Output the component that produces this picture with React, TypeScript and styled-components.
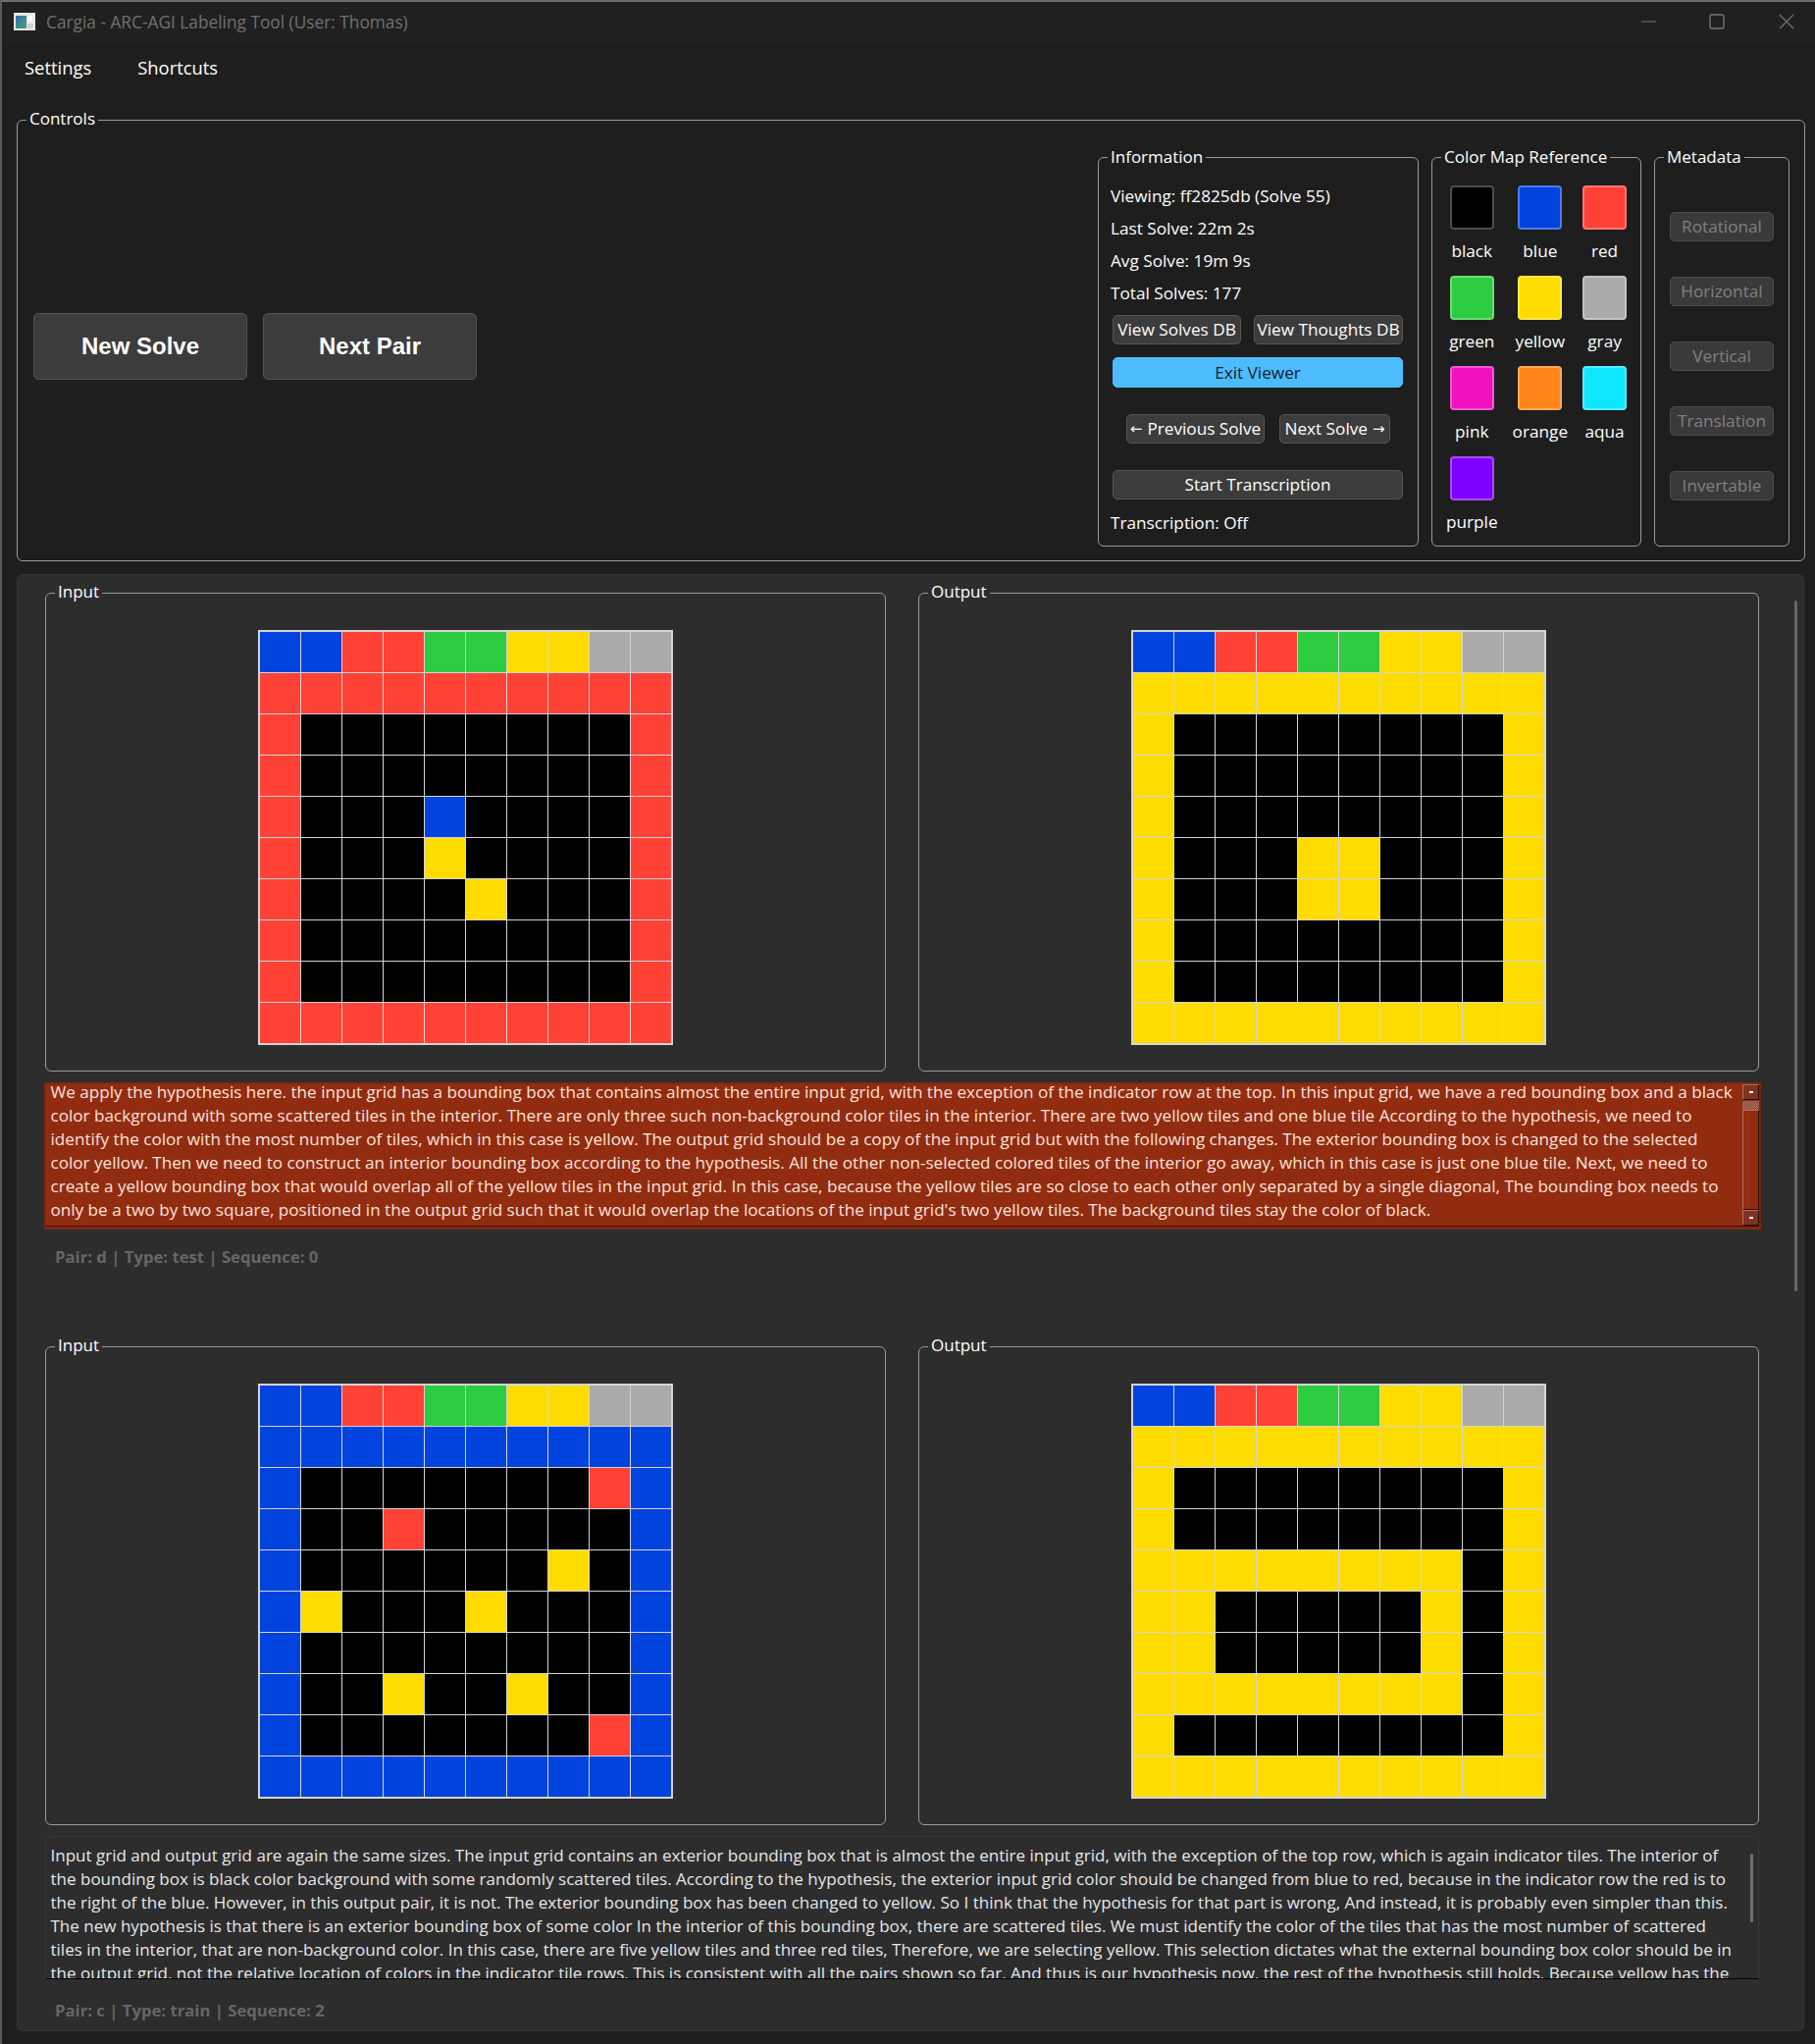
import * as React from 'react';
import styled, { createGlobalStyle } from 'styled-components';

const COLORS: Record<string, string> = {
  k: '#000000',
  b: '#0043df',
  r: '#ff4136',
  g: '#2ecc40',
  y: '#ffdc00',
  a: '#aaaaaa',
  p: '#f012be',
  o: '#ff851b',
  c: '#0fe6ff',
  u: '#7f00ff',
};

const SWATCHES = [
  { name: 'black', code: 'k' },
  { name: 'blue', code: 'b' },
  { name: 'red', code: 'r' },
  { name: 'green', code: 'g' },
  { name: 'yellow', code: 'y' },
  { name: 'gray', code: 'a' },
  { name: 'pink', code: 'p' },
  { name: 'orange', code: 'o' },
  { name: 'aqua', code: 'c' },
  { name: 'purple', code: 'u' },
];

const METADATA = ['Rotational', 'Horizontal', 'Vertical', 'Translation', 'Invertable'];

const INDICATOR = 'bbrrggyyaa';

const PAIRS = [
  {
    input: [
      INDICATOR,
      'rrrrrrrrrr',
      'rkkkkkkkkr',
      'rkkkkkkkkr',
      'rkkkbkkkkr',
      'rkkkykkkkr',
      'rkkkkykkkr',
      'rkkkkkkkkr',
      'rkkkkkkkkr',
      'rrrrrrrrrr',
    ],
    output: [
      INDICATOR,
      'yyyyyyyyyy',
      'ykkkkkkkky',
      'ykkkkkkkky',
      'ykkkkkkkky',
      'ykkkyykkky',
      'ykkkyykkky',
      'ykkkkkkkky',
      'ykkkkkkkky',
      'yyyyyyyyyy',
    ],
    active: true,
    boxHeight: 150,
    labelHeight: 107,
    labelTop: 16,
    lines: [
      'We apply the hypothesis here. the input grid has a bounding box that contains almost the entire input grid, with the exception of the indicator row at the top. In this input grid, we have a red bounding box and a black',
      'color background with some scattered tiles in the interior. There are only three such non-background color tiles in the interior. There are two yellow tiles and one blue tile According to the hypothesis, we need to',
      'identify the color with the most number of tiles, which in this case is yellow. The output grid should be a copy of the input grid but with the following changes. The exterior bounding box is changed to the selected',
      'color yellow. Then we need to construct an interior bounding box according to the hypothesis. All the other non-selected colored tiles of the interior go away, which in this case is just one blue tile. Next, we need to',
      'create a yellow bounding box that would overlap all of the yellow tiles in the input grid. In this case, because the yellow tiles are so close to each other only separated by a single diagonal, The bounding box needs to',
      "only be a two by two square, positioned in the output grid such that it would overlap the locations of the input grid's two yellow tiles. The background tiles stay the color of black.",
    ],
    label: 'Pair: d | Type: test | Sequence: 0',
  },
  {
    input: [
      INDICATOR,
      'bbbbbbbbbb',
      'bkkkkkkkrb',
      'bkkrkkkkkb',
      'bkkkkkkykb',
      'bykkkykkkb',
      'bkkkkkkkkb',
      'bkkykkykkb',
      'bkkkkkkkrb',
      'bbbbbbbbbb',
    ],
    output: [
      INDICATOR,
      'yyyyyyyyyy',
      'ykkkkkkkky',
      'ykkkkkkkky',
      'yyyyyyyyky',
      'yykkkkkyky',
      'yykkkkkyky',
      'yyyyyyyyky',
      'ykkkkkkkky',
      'yyyyyyyyyy',
    ],
    active: false,
    boxHeight: 146,
    labelHeight: 52,
    labelTop: 20,
    lines: [
      'Input grid and output grid are again the same sizes. The input grid contains an exterior bounding box that is almost the entire input grid, with the exception of the top row, which is again indicator tiles. The interior of',
      'the bounding box is black color background with some randomly scattered tiles. According to the hypothesis, the exterior input grid color should be changed from blue to red, because in the indicator row the red is to',
      'the right of the blue. However, in this output pair, it is not. The exterior bounding box has been changed to yellow. So I think that the hypothesis for that part is wrong, And instead, it is probably even simpler than this.',
      'The new hypothesis is that there is an exterior bounding box of some color In the interior of this bounding box, there are scattered tiles. We must identify the color of the tiles that has the most number of scattered',
      'tiles in the interior, that are non-background color. In this case, there are five yellow tiles and three red tiles, Therefore, we are selecting yellow. This selection dictates what the external bounding box color should be in',
      'the output grid, not the relative location of colors in the indicator tile rows. This is consistent with all the pairs shown so far, And thus is our hypothesis now. the rest of the hypothesis still holds. Because yellow has the',
    ],
    label: 'Pair: c | Type: train | Sequence: 2',
  },
];

const GlobalStyle = createGlobalStyle`
  html, body {
    margin: 0;
    padding: 0;
    background: #1e1e1e;
  }
  * {
    box-sizing: border-box;
  }
`;

const Window = styled.div`
  width: 1850px;
  height: 2083px;
  overflow: hidden;
  display: flex;
  flex-direction: column;
  background: #1e1e1e;
  border-top: 2px solid #6e6e6e;
  border-left: 2px solid #5a5a5a;
  color: #ffffff;
  font-family: 'Open Sans', 'Noto Sans', sans-serif;
  font-size: 17.2px;
`;

const TitleBar = styled.div`
  height: 42px;
  flex: none;
  display: flex;
  align-items: center;
  background: #202020;
  padding: 0 0 2px 12px;
  color: #707070;
  font-size: 17.3px;
`;

const TitleText = styled.span`
  margin-left: 11px;
  flex: 1;
`;

const WindowButton = styled.svg<{ $gap: number }>`
  width: 16px;
  height: 16px;
  margin-right: ${p => p.$gap}px;
  color: #757575;
`;

const MenuBar = styled.div`
  height: 48px;
  flex: none;
  display: flex;
  align-items: center;
  padding-left: 23px;
  gap: 47px;
  font-size: 18.4px;
`;

const Content = styled.div`
  flex: 1;
  display: flex;
  flex-direction: column;
  gap: 13px;
  padding: 18px 10px 0 15px;
`;

const Group = styled.fieldset<{ $height: number; $width?: number }>`
  margin: 0;
  padding: 0;
  min-width: 0;
  height: ${p => p.$height}px;
  width: ${p => (p.$width ? `${p.$width}px` : 'auto')};
  border: 1px solid #9a9a9a;
  border-radius: 6px;
`;

const GroupTitle = styled.legend`
  margin-left: 9px;
  padding: 0 3px;
  height: 24px;
  line-height: 22px;
  color: #ffffff;
  font-size: 17px;
`;

const ControlsRow = styled.div`
  height: 437px;
  display: flex;
  align-items: center;
  justify-content: space-between;
  padding: 0 15px 0 16px;
`;

const MainButtons = styled.div`
  display: flex;
  gap: 16px;
`;

const BigButton = styled.div`
  width: 218px;
  height: 68px;
  display: flex;
  align-items: center;
  justify-content: center;
  background: #3c3c3c;
  border: 1px solid #525252;
  border-radius: 5px;
  font-family: 'Liberation Sans', Arial, sans-serif;
  font-size: 24px;
  font-weight: 700;
`;

const SidePanels = styled.div`
  display: flex;
  gap: 13px;
`;

const InfoBody = styled.div`
  padding: 10px 12px 0;
  display: flex;
  flex-direction: column;
`;

const InfoLine = styled.div<{ $top?: number }>`
  height: 33px;
  line-height: 33px;
  flex: none;
  margin-top: ${p => p.$top || 0}px;
  white-space: nowrap;
`;

const ButtonRow = styled.div<{ $top: number; $gap?: number; $inset?: number }>`
  margin-top: ${p => p.$top}px;
  margin-left: ${p => 2 + (p.$inset || 0)}px;
  display: flex;
  gap: ${p => p.$gap || 0}px;
`;

const SmallButton = styled.div<{ $width: number; $primary?: boolean; $height?: number }>`
  width: ${p => p.$width}px;
  height: ${p => p.$height || 30}px;
  display: flex;
  align-items: center;
  justify-content: center;
  gap: 5px;
  flex: none;
  white-space: nowrap;
  background: ${p => (p.$primary ? '#4cbcff' : '#3c3c3c')};
  color: ${p => (p.$primary ? '#16222c' : '#ffffff')};
  border: 1px solid ${p => (p.$primary ? '#4cbcff' : '#565656')};
  border-radius: 5px;
`;

const Arrow = styled.span`
  font-family: 'DejaVu Sans', sans-serif;
  font-size: 15px;
`;

const SwatchGrid = styled.div`
  display: grid;
  grid-template-columns: auto auto auto;
  grid-auto-rows: 92px;
  justify-content: start;
  column-gap: 15px;
  padding: 16px 0 0 14px;
`;

const SwatchCell = styled.div`
  display: flex;
  flex-direction: column;
  align-items: center;
  gap: 10px;
`;

const Swatch = styled.div<{ $color: string }>`
  width: 45px;
  height: 45px;
  flex: none;
  background: ${p => p.$color};
  border: 2px solid rgba(255, 255, 255, 0.3);
  border-radius: 4px;
`;

const SwatchName = styled.span`
  line-height: 24px;
`;

const MetaList = styled.div`
  display: flex;
  flex-direction: column;
  align-items: center;
  gap: 36px;
  padding-top: 43px;
`;

const MetaButton = styled.div`
  width: 106px;
  height: 30px;
  display: flex;
  align-items: center;
  justify-content: center;
  background: #3a3a3a;
  color: #808080;
  border: 1px solid #4c4c4c;
  border-radius: 5px;
`;

const PairsScroll = styled.div`
  width: 1822px;
  height: 1485px;
  flex: none;
  display: flex;
  flex-direction: column;
  padding: 6px 0 0 28px;
  background: #2d2d2d;
  border: 1px solid #353535;
  border-radius: 6px;
  position: relative;
`;

const GridsRow = styled.div`
  display: flex;
  flex: none;
  gap: 33px;
  width: 1747px;
`;

const GridCenter = styled.div`
  height: 475px;
  display: flex;
  align-items: center;
  justify-content: center;
`;

const CellGrid = styled.div`
  width: 423px;
  height: 423px;
  display: grid;
  grid-template-columns: repeat(10, 1fr);
  grid-template-rows: repeat(10, 1fr);
  gap: 1.4px;
  padding: 2px;
  background: #d4d4d4;
`;

const Cell = styled.div<{ $color: string }>`
  background: ${p => p.$color};
`;

const TextBox = styled.div<{ $active: boolean; $height: number }>`
  margin-top: 11px;
  margin-left: ${p => (p.$active ? -1 : 0)}px;
  width: ${p => (p.$active ? 1750 : 1747)}px;
  height: ${p => p.$height}px;
  flex: none;
  display: flex;
  overflow: ${p => (p.$active ? 'visible' : 'hidden')};
  background: ${p => (p.$active ? '#922c10' : '#2d2d2d')};
  color: ${p => (p.$active ? '#f7e2da' : '#e6e6e6')};
  border: 1px solid ${p => (p.$active ? '#7c2a14' : '#383838')};
  border-top-width: ${p => (p.$active ? 2 : 1)}px;
  border-right-width: ${p => (p.$active ? 2 : 1)}px;
  border-bottom: ${p => (p.$active ? '3px solid #7c2a14' : '1px solid #000000')};
  box-shadow: ${p => (p.$active ? 'inset 0 -1px 0 #3a1006' : 'none')};
  border-radius: ${p => (p.$active ? 0 : '6px 6px 0 0')};
`;

const TextLines = styled.div<{ $active: boolean }>`
  flex: 1;
  padding: ${p => (p.$active ? '0 5.5px' : '7px 4.5px 0')};
  margin-top: ${p => (p.$active ? -4 : 0)}px;
  font-size: ${p => (p.$active ? 17.13 : 17.03)}px;
`;

const TextLine = styled.div`
  height: 24px;
  line-height: 24px;
  white-space: nowrap;
`;

const OldScrollbar = styled.div`
  width: 17px;
  flex: none;
  display: flex;
  flex-direction: column;
  padding-bottom: 1px;
`;

const ScrollArrow = styled.div`
  height: 16px;
  flex: none;
  display: flex;
  align-items: center;
  justify-content: center;
  background: #7f3320;
  border: 1px solid #b07060;
  border-right-color: #2a0f06;
  border-bottom-color: #2a0f06;
  &::after {
    content: '';
    width: 4px;
    height: 2px;
    background: #ffffff;
  }
`;

const ScrollThumb = styled.div`
  height: 9px;
  flex: none;
  margin-top: 1px;
  background: repeating-conic-gradient(#a9705f 0 25%, #8a4a38 0 50%) 0 0 / 2px 2px;
`;

const ScrollTrack = styled.div`
  flex: 1;
  border: 1px solid #b07060;
  border-right-color: #2a0f06;
  border-bottom-color: #2a0f06;
`;

const ThinScrollbar = styled.div`
  width: 3px;
  height: 70px;
  flex: none;
  margin: 17px 5px 0 0;
  background: #6e6e6e;
  border-radius: 2px;
`;

const PairLabel = styled.div<{ $height: number; $top: number }>`
  height: ${p => p.$height}px;
  flex: none;
  padding-left: 10px;
  padding-top: ${p => p.$top}px;
  color: #666666;
  font-size: 16.7px;
  font-weight: 700;
  line-height: 24px;
`;

const PanelScrollbar = styled.div`
  position: absolute;
  top: 26px;
  right: 6px;
  width: 3px;
  height: 704px;
  background: #666666;
  border-radius: 2px;
`;

const AppIcon = () => (
  <svg width="22" height="18" viewBox="0 0 22 18">
    <defs>
      <linearGradient id="iconFill" x1="0" y1="0" x2="1" y2="1">
        <stop offset="0" stopColor="#2f6fb0" />
        <stop offset="1" stopColor="#4fa070" />
      </linearGradient>
    </defs>
    <rect width="22" height="18" fill="#e8e8e8" />
    <rect x="2" y="3" width="11" height="13" fill="url(#iconFill)" />
    <rect x="15" y="3" width="4" height="6" fill="#ffffff" />
    <rect x="14" y="11" width="6" height="5" fill="#d2d2d2" />
  </svg>
);

const WindowControls = () => (
  <>
    <WindowButton $gap={53} viewBox="0 0 16 16">
      <path d="M0 8h15" stroke="currentColor" strokeWidth="1" />
    </WindowButton>
    <WindowButton $gap={55} viewBox="0 0 16 16">
      <rect x="1" y="1" width="14" height="14" rx="2" fill="none" stroke="currentColor" strokeWidth="1.4" />
    </WindowButton>
    <WindowButton $gap={21} viewBox="0 0 16 16">
      <path d="M1 1l14 14M15 1L1 15" stroke="currentColor" strokeWidth="1.2" />
    </WindowButton>
  </>
);

const TileGrid = ({ rows }: { rows: string[] }) => (
  <CellGrid>
    {rows.join('').split('').map((code, i) => (
      <Cell key={i} $color={COLORS[code]} />
    ))}
  </CellGrid>
);

export default function App() {
  return (
    <Window>
      <GlobalStyle />
      <TitleBar>
        <AppIcon />
        <TitleText>Cargia - ARC-AGI Labeling Tool (User: Thomas)</TitleText>
        <WindowControls />
      </TitleBar>
      <MenuBar>
        <span>Settings</span>
        <span>Shortcuts</span>
      </MenuBar>
      <Content>
        <Group $height={462}>
          <GroupTitle>Controls</GroupTitle>
          <ControlsRow>
            <MainButtons>
              <BigButton>New Solve</BigButton>
              <BigButton>Next Pair</BigButton>
            </MainButtons>
            <SidePanels>
              <Group $height={408} $width={327}>
                <GroupTitle>Information</GroupTitle>
                <InfoBody>
                  <InfoLine>Viewing: ff2825db (Solve 55)</InfoLine>
                  <InfoLine>Last Solve: 22m 2s</InfoLine>
                  <InfoLine>Avg Solve: 19m 9s</InfoLine>
                  <InfoLine>Total Solves: 177</InfoLine>
                  <ButtonRow $top={6} $gap={13}>
                    <SmallButton $width={131}>View Solves DB</SmallButton>
                    <SmallButton $width={152}>View Thoughts DB</SmallButton>
                  </ButtonRow>
                  <ButtonRow $top={13}>
                    <SmallButton $width={296} $height={31} $primary>Exit Viewer</SmallButton>
                  </ButtonRow>
                  <ButtonRow $top={27} $gap={15} $inset={14}>
                    <SmallButton $width={141}><Arrow>←</Arrow>Previous Solve</SmallButton>
                    <SmallButton $width={113}>Next Solve<Arrow>→</Arrow></SmallButton>
                  </ButtonRow>
                  <ButtonRow $top={27}>
                    <SmallButton $width={296}>Start Transcription</SmallButton>
                  </ButtonRow>
                  <InfoLine $top={7}>Transcription: Off</InfoLine>
                </InfoBody>
              </Group>
              <Group $height={408} $width={214}>
                <GroupTitle>Color Map Reference</GroupTitle>
                <SwatchGrid>
                  {SWATCHES.map(s => (
                    <SwatchCell key={s.name}>
                      <Swatch $color={COLORS[s.code]} />
                      <SwatchName>{s.name}</SwatchName>
                    </SwatchCell>
                  ))}
                </SwatchGrid>
              </Group>
              <Group $height={408} $width={138}>
                <GroupTitle>Metadata</GroupTitle>
                <MetaList>
                  {METADATA.map(m => (
                    <MetaButton key={m}>{m}</MetaButton>
                  ))}
                </MetaList>
              </Group>
            </SidePanels>
          </ControlsRow>
        </Group>
        <PairsScroll>
          <PanelScrollbar />
          {PAIRS.map(pair => (
            <React.Fragment key={pair.label}>
              <GridsRow>
                <Group $height={500} $width={857}>
                  <GroupTitle>Input</GroupTitle>
                  <GridCenter>
                    <TileGrid rows={pair.input} />
                  </GridCenter>
                </Group>
                <Group $height={500} $width={857}>
                  <GroupTitle>Output</GroupTitle>
                  <GridCenter>
                    <TileGrid rows={pair.output} />
                  </GridCenter>
                </Group>
              </GridsRow>
              <TextBox $active={pair.active} $height={pair.boxHeight}>
                <TextLines $active={pair.active}>
                  {pair.lines.map(line => (
                    <TextLine key={line}>{line}</TextLine>
                  ))}
                </TextLines>
                {pair.active ? (
                  <OldScrollbar>
                    <ScrollArrow />
                    <ScrollThumb />
                    <ScrollTrack />
                    <ScrollArrow />
                  </OldScrollbar>
                ) : (
                  <ThinScrollbar />
                )}
              </TextBox>
              <PairLabel $height={pair.labelHeight} $top={pair.labelTop}>{pair.label}</PairLabel>
            </React.Fragment>
          ))}
        </PairsScroll>
      </Content>
    </Window>
  );
}
